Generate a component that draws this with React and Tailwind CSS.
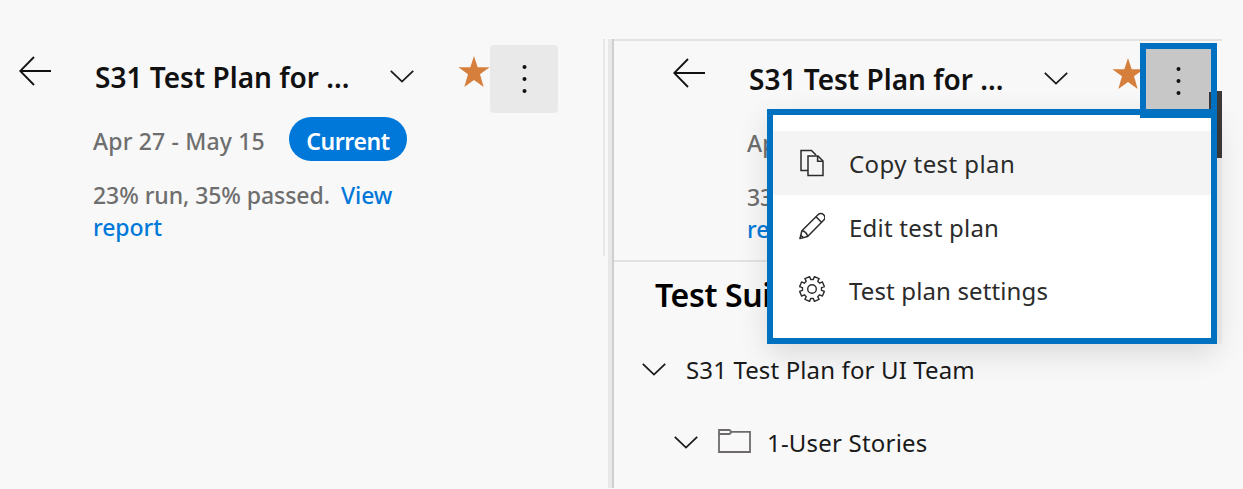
function ArrowLeft() {
  return (
    <svg className="mt-[11px] h-8 w-8 shrink-0" viewBox="0 0 32 32" fill="none" stroke="#111" strokeWidth="1.8">
      <path d="M32 15H1.5M15 1L1.2 15L15 29" />
    </svg>
  );
}

function Chevron({ className }) {
  return (
    <svg className={`h-[13px] w-6 shrink-0 ${className}`} viewBox="0 0 24 13" fill="none" stroke="#1a1a1a" strokeWidth="1.8">
      <path d="M0.8 0.8L12 11.6L23.2 0.8" />
    </svg>
  );
}

function Star() {
  return (
    <svg className="mt-[10px] h-[33px] w-8 shrink-0" viewBox="0 0 32 33">
      <path fill="#d67f3c" d="M16 1L19.7 12.3H31.6L22 19.3L25.7 32L16 24.9L6.3 32L10 19.3L0.4 12.3H12.3Z" />
    </svg>
  );
}

function Dots() {
  return (
    <svg className="h-7 w-[5px]" viewBox="0 0 5 28" fill="#111">
      <circle cx="2.5" cy="2" r="2" />
      <circle cx="2.5" cy="14" r="2" />
      <circle cx="2.5" cy="26" r="2" />
    </svg>
  );
}

function CopyIcon() {
  return (
    <svg className="h-7 w-[26px]" viewBox="0 0 26 28" fill="none" stroke="#2b2b2b" strokeWidth="1.5">
      <path d="M9 21.5H2V1.5H12.5L17 6" />
      <path d="M9 7H19L24 12V26.5H9Z" />
      <path d="M18.6 7V12.2H24" />
    </svg>
  );
}

function PencilIcon() {
  return (
    <svg className="h-7 w-[26px]" viewBox="0 0 26 28" fill="none" stroke="#2b2b2b" strokeWidth="1.5" strokeLinejoin="round">
      <path d="M0.9 26.6L2.9 18.8L19 2.7A3.9 3.9 0 0 1 24.6 8.3L8.6 24.5Z" />
      <path d="M17 4.8L22.5 10.3M2.9 18.8C5.6 19 8.3 21.6 8.6 24.5M1.9 23.3L4.2 25.6" />
    </svg>
  );
}

function GearIcon() {
  const points = [];
  for (let i = 0; i < 8; i++) {
    for (const [offset, radius] of [[-0.32, 9.6], [-0.26, 12.6], [0.26, 12.6], [0.32, 9.6]]) {
      const angle = ((i + 0.5 + offset) * Math.PI) / 4;
      points.push(`${(13 + radius * Math.cos(angle)).toFixed(2)} ${(13 + radius * Math.sin(angle)).toFixed(2)}`);
    }
  }
  return (
    <svg className="h-[26px] w-[26px]" viewBox="0 0 26 26" fill="none" stroke="#2b2b2b" strokeWidth="1.4" strokeLinejoin="round">
      <path d={`M${points.join("L")}Z`} />
      <circle cx="13" cy="13" r="4.3" />
    </svg>
  );
}

function FolderIcon() {
  return (
    <svg className="h-6 w-[33px] shrink-0" viewBox="0 0 33 24" fill="none" stroke="#6e6a6c" strokeWidth="1.8">
      <path d="M1 1H11.5L13.5 2.8H32V23H1Z" />
      <path d="M1 5H11.5L13.5 3" />
    </svg>
  );
}

function PlanHeader({ stats, active }) {
  return (
    <div className="w-[558px] shrink-0">
      <div className="flex h-[68px] items-start pl-[19px]">
        <ArrowLeft />
        <h1 className="ml-11 mt-3 w-[260px] whitespace-nowrap text-[28px] font-semibold leading-10 text-[#111]">S31 Test Plan for ...</h1>
        <Chevron className="ml-[35px] mt-[25px]" />
        <div className="ml-[44px] flex">
          <Star />
          <div className={`flex h-[68px] w-[68px] items-center justify-center rounded ${active ? "bg-[#c8c8c8]" : "bg-[#e9e9e9]"}`}>
            <Dots />
          </div>
        </div>
      </div>
      <div className="ml-[93px] mt-[4px] flex h-11 items-center text-[23px] font-medium text-[#6e6e6e]">
        <span className="w-[196px] whitespace-nowrap pt-1 tracking-[0.16px]">Apr 27 - May 15</span>
        <span className="flex h-11 w-[118px] items-center justify-center rounded-full bg-[#0078d9] pt-1 font-semibold tracking-[-0.4px] text-white">Current</span>
      </div>
      <p className="ml-[93px] mt-[18px] whitespace-nowrap text-[23px] font-medium leading-8 tracking-[-0.06px] text-[#6e6e6e]">
        {stats}
        <span className="ml-[11px] text-[#0078d9]">View<br />report</span>
      </p>
    </div>
  );
}

function MenuItem({ icon, label, className }) {
  return (
    <li className={`flex items-center pl-[26px] ${className}`}>
      <span className="-mt-px flex w-[26px] justify-center">{icon}</span>
      <span className="ml-6 whitespace-nowrap pt-[2px] text-[24px] text-[#2b2b2b]">{label}</span>
    </li>
  );
}

export default function App() {
  return (
    <main className="relative flex h-[489px] w-[1243px] overflow-hidden bg-[#f8f8f8] font-['Noto_Sans',sans-serif]">
      <section className="w-[603px] pt-[45px]">
        <PlanHeader stats="23% run, 35% passed." />
      </section>
      <div className="mr-[3px] mt-[39px] h-[217px] w-[2px] bg-[#e6e6e6]" />
      <section className="mt-[39px] flex h-[449px] w-[614px]">
        <div className="h-full w-[6px] border-r-2 border-[#cfcfcf] bg-[#e8e8e8]" />
        <div className="w-[608px] border-t-2 border-[#e3e3e3]">
          <div className="h-[221px] border-b-2 border-[#e3e3e3] pl-10 pt-[6px]">
            <PlanHeader stats="33% run, 35% passed." active />
          </div>
          <h2 className="ml-[41px] mt-[9px] text-[32px] font-semibold leading-[48px] tracking-[-0.35px] text-black">Test Suites</h2>
          <div className="mt-[31px] flex h-10 items-center pl-[28px]">
            <Chevron className="-mt-[2px]" />
            <span className="ml-[20px] text-[24px] tracking-[0.13px] text-[#1a1a1a]">S31 Test Plan for UI Team</span>
          </div>
          <div className="mt-8 flex h-10 items-center pl-[60px]">
            <Chevron />
            <span className="ml-5 -mt-[2px] flex"><FolderIcon /></span>
            <span className="ml-4 pt-px text-[24px] tracking-[0.2px] text-[#1a1a1a]">1-User Stories</span>
          </div>
        </div>
      </section>

      <div className="absolute left-[1209px] top-[91px] h-[67px] w-[13px] rounded-l-[3px] bg-[#3b3a39]" />
      <div className="absolute left-[1217px] top-[158px] h-[186px] w-[5px] bg-[#f0f0f0]" />

      <ul className="absolute left-[767px] top-[109px] h-[235px] w-[450px] border-[6px] border-[#0070c0] bg-white pt-[16px] shadow-[0_10px_28px_rgba(0,0,0,0.12)]">
        <MenuItem className="h-16 bg-[#f4f4f4] tracking-[0.42px]" icon={<CopyIcon />} label="Copy test plan" />
        <MenuItem className="h-[63px] tracking-[0.22px]" icon={<PencilIcon />} label="Edit test plan" />
        <MenuItem className="h-[63px] tracking-[0.13px]" icon={<GearIcon />} label="Test plan settings" />
      </ul>
      <div className="absolute left-[1140px] top-[43px] flex h-[75px] w-[77px] items-start justify-center border-[6px] border-b-[9px] border-[#0070c0] bg-[#c7c7c7] pt-[18px]">
        <Dots />
        <span className="absolute bottom-0 right-0 h-[17px] w-[2px] bg-[#3b3a39]" />
      </div>
    </main>
  );
}
